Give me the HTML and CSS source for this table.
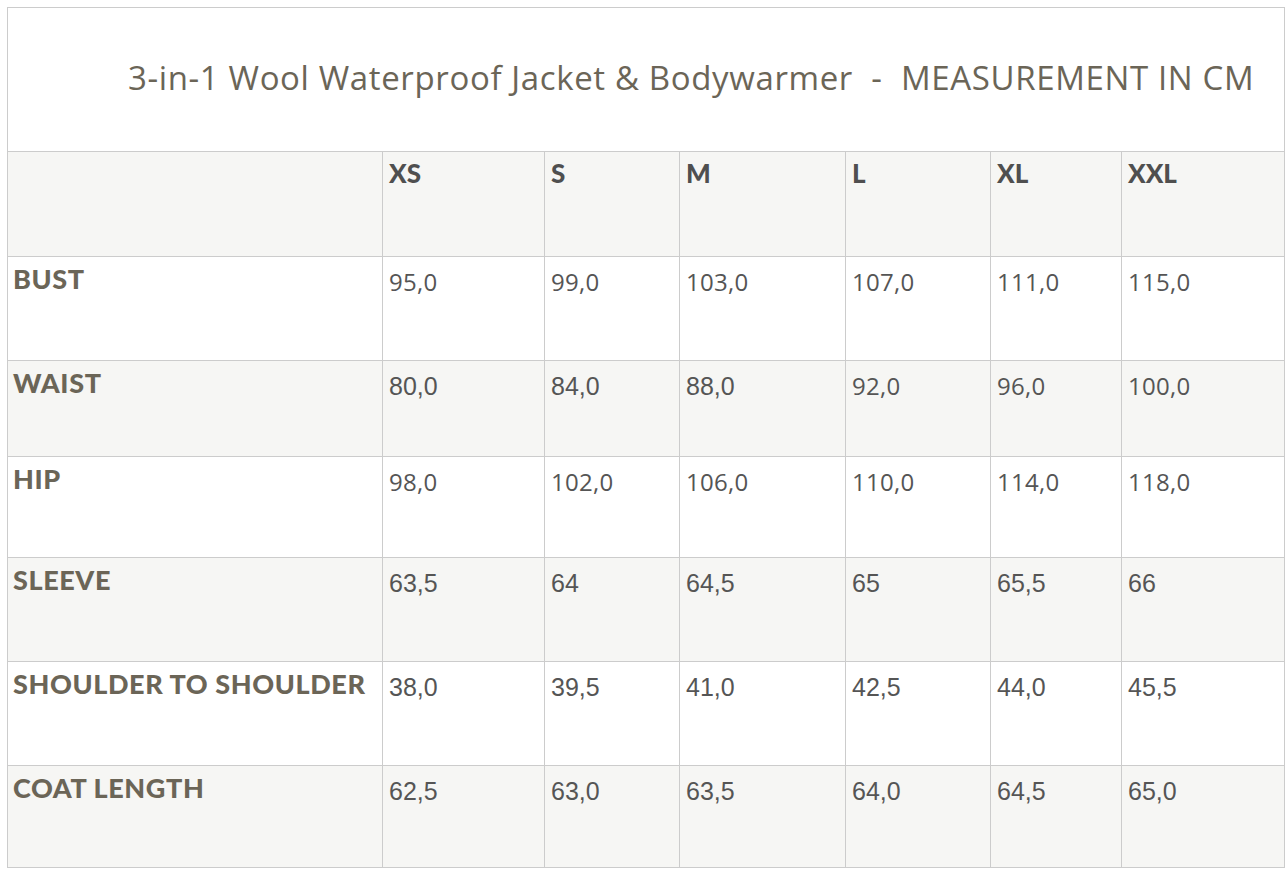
FILE: index.html
```html
<!DOCTYPE html>
<html>
<head>
<meta charset="utf-8">
<link rel="stylesheet" href="styles.css">
</head>
<body>
<table class="size-table">
  <colgroup>
    <col class="c0"><col class="c1"><col class="c2"><col class="c3"><col class="c4"><col class="c5"><col class="c6">
  </colgroup>
  <tr class="title-row">
    <td colspan="7" class="title">3-in-1 Wool Waterproof Jacket &amp; Bodywarmer&nbsp; -&nbsp; MEASUREMENT IN CM</td>
  </tr>
  <tr class="head-row shade">
    <td></td>
    <td class="size">XS</td><td class="size">S</td><td class="size">M</td><td class="size">L</td><td class="size">XL</td><td class="size">XXL</td>
  </tr>
  <tr class="r-bust">
    <td class="label">BUST</td>
    <td class="v geo">95,0</td><td class="v geo">99,0</td><td class="v geo">103,0</td><td class="v geo">107,0</td><td class="v geo">111,0</td><td class="v geo">115,0</td>
  </tr>
  <tr class="r-waist shade">
    <td class="label">WAIST</td>
    <td class="v hel">80,0</td><td class="v hel">84,0</td><td class="v hel">88,0</td><td class="v geo">92,0</td><td class="v geo">96,0</td><td class="v geo">100,0</td>
  </tr>
  <tr class="r-hip">
    <td class="label">HIP</td>
    <td class="v geo">98,0</td><td class="v geo">102,0</td><td class="v geo">106,0</td><td class="v geo">110,0</td><td class="v geo">114,0</td><td class="v geo">118,0</td>
  </tr>
  <tr class="r-sleeve shade">
    <td class="label">SLEEVE</td>
    <td class="v hel">63,5</td><td class="v hel">64</td><td class="v hel">64,5</td><td class="v hel">65</td><td class="v hel">65,5</td><td class="v hel">66</td>
  </tr>
  <tr class="r-shoulder">
    <td class="label">SHOULDER TO SHOULDER</td>
    <td class="v hel">38,0</td><td class="v hel">39,5</td><td class="v hel">41,0</td><td class="v hel">42,5</td><td class="v hel">44,0</td><td class="v hel">45,5</td>
  </tr>
  <tr class="r-coat shade">
    <td class="label">COAT LENGTH</td>
    <td class="v hel">62,5</td><td class="v hel">63,0</td><td class="v hel">63,5</td><td class="v hel">64,0</td><td class="v hel">64,5</td><td class="v hel">65,0</td>
  </tr>
</table>
</body>
</html>
```
FILE: styles.css
```css
html, body {
  margin: 0;
  padding: 0;
  background: #ffffff;
}
body {
  padding: 7px;
}
.size-table {
  border-collapse: collapse;
  table-layout: fixed;
  width: 1277px;
}
.c0 { width: 375px; }
.c1 { width: 162px; }
.c2 { width: 135px; }
.c3 { width: 166px; }
.c4 { width: 145px; }
.c5 { width: 131px; }
.c6 { width: 163px; }

.size-table td {
  border: 1px solid #cccccc;
  vertical-align: top;
  padding: 8px 6px 0 6px;
  box-sizing: border-box;
  line-height: 30px;
}
.shade td { background: #f6f6f4; }

.title-row { height: 144px; }
.head-row { height: 105px; }
.r-bust { height: 104px; }
.r-waist { height: 96px; }
.r-hip { height: 101px; }
.r-sleeve { height: 104px; }
.r-shoulder { height: 104px; }
.r-coat { height: 102px; }

.size-table td.title {
  vertical-align: middle;
  padding: 0 0 4px 120px;
  font-family: "Open Sans", "Noto Sans", sans-serif;
  font-size: 33px;
  line-height: 40px;
  font-weight: 400;
  color: #6b6557;
  white-space: nowrap;
  letter-spacing: 0.63px;
}
.size {
  font-family: Lato, "Noto Sans", sans-serif;
  font-weight: 900;
  font-size: 26px;
  color: #4f4f4f;
}
.label {
  font-family: Lato, "Noto Sans", sans-serif;
  font-weight: 900;
  font-size: 27px;
  color: #6b6557;
  white-space: nowrap;
  letter-spacing: 0.6px;
}
.size-table td.label { padding-left: 5px; padding-top: 7px; }
.size-table td.size { padding-top: 6px; }
.v {
  color: #555555;
}
.size-table td.v { padding-top: 10px; }
.geo {
  font-family: "Open Sans", "Noto Sans", sans-serif;
  font-weight: 400;
  font-size: 24px;
  letter-spacing: 0.3px;
}
.hel {
  font-family: "Liberation Sans", Arial, sans-serif;
  font-weight: 400;
  font-size: 25px;
}
```
